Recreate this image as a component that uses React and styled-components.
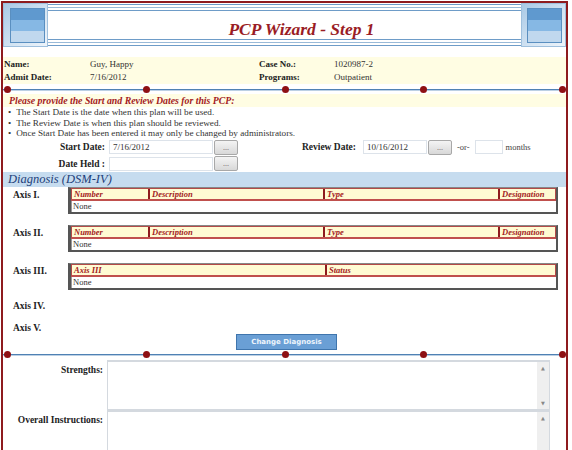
import React from "react";
import styled, { createGlobalStyle } from "styled-components";

const GlobalStyle = createGlobalStyle`
  html, body {
    margin: 0;
    padding: 0;
    background: #ffffff;
  }
  body {
    font-family: "Liberation Serif", serif;
    font-size: 8px;
    color: #222;
    overflow: hidden;
  }
`;

const Page = styled.div`
  width: 567px;
  height: 470px;
  margin-left: 1px;
  margin-top: 1px;
  border: 2px solid #8e1b1e;
  box-sizing: border-box;
  background: #fff;
  font-family: "Liberation Serif", serif;
`;

const Header = styled.div`
  display: flex;
  height: 44px;
`;

const Corner = styled.div`
  width: 45px;
  height: 44px;
  flex: none;
  position: relative;
  background: linear-gradient(135deg, #a9c9e6 0%, #d5e5f3 60%, #eef4fa 100%);
  border: 1px solid #9fc0dd;
  box-sizing: border-box;
`;

const CornerInner = styled.div`
  position: absolute;
  top: 4px;
  left: ${(p) => (p.$right ? "5px" : "6px")};
  width: 33px;
  height: 33px;
  border: 1px solid #5a8fc0;
  display: flex;
  flex-direction: column;
`;

const Band = styled.div`
  flex: 1;
  background: ${(p) => p.color};
`;

const TitleArea = styled.div`
  flex: 1;
  display: flex;
  flex-direction: column;
  justify-content: space-between;
`;

const Stripes = styled.div`
  display: flex;
  flex-direction: column;
  gap: 2px;
  padding: ${(p) => (p.$bottom ? "0 0 1px" : "1px 0 0")};
`;

const Stripe = styled.div`
  height: 1px;
  background: #6e9cc8;
  opacity: ${(p) => p.$o || 1};
`;

const Title = styled.div`
  text-align: center;
  font-size: 17.5px;
  line-height: 18px;
  font-weight: bold;
  font-style: italic;
  color: #9a1c25;
  padding: 7px 0 0 34px;
`;

const Info = styled.div`
  margin-top: 10px;
  background: #fffde3;
  padding: 2px 0 1px 1px;
  display: grid;
  grid-template-columns: 86px 169px 75px 1fr;
  row-gap: 2px;
  line-height: 11px;
  font-size: 9px;
`;

const Label = styled.div`
  font-weight: bold;
  color: #222;
`;

const Value = styled.div`
  color: #333;
`;

const DividerWrap = styled.div`
  position: relative;
  height: 7px;
  margin: ${(p) => p.$margin || "2px 0"};
  display: flex;
  align-items: center;
  justify-content: space-between;
  padding: 0 0 0 1px;
`;

const DividerLine = styled.div`
  position: absolute;
  left: 0;
  right: 0;
  top: 3px;
  height: 1px;
  background: #4f81b4;
  box-shadow: 0 1px 0 #bcd0e4;
`;

const Dot = styled.div`
  width: 7px;
  height: 7px;
  border-radius: 50%;
  background: #8e1014;
  position: relative;
  z-index: 1;
`;

const Notice = styled.div`
  background: #fffde3;
  color: #a31a22;
  font-style: italic;
  font-weight: bold;
  font-size: 9.8px;
  line-height: 13px;
  padding-left: 6px;
`;

const Bullets = styled.ul`
  margin: 0;
  padding: 0 0 0 5px;
  list-style: none;
  font-size: 9.2px;
  line-height: 10.5px;
  color: #333;
`;

const Bullet = styled.li`
  &::before {
    content: "•";
    margin-right: 5px;
  }
`;

const DateRow = styled.div`
  display: flex;
  align-items: center;
  height: ${(p) => p.$h || 17}px;
`;

const DateLabel = styled.div`
  width: ${(p) => p.$w}px;
  text-align: right;
  font-weight: bold;
  font-size: 9.5px;
  color: #222;
  padding-right: ${(p) => p.$pr || 4}px;
  box-sizing: border-box;
`;

const DateInput = styled.div`
  width: ${(p) => p.$w}px;
  height: 14px;
  margin-left: ${(p) => p.$ml || 0}px;
  border: 1px solid #dde3ea;
  box-sizing: border-box;
  padding-left: 3px;
  line-height: 12px;
  font-size: 9px;
  color: #333;
  background: #fff;
`;

const PickBtn = styled.div`
  width: 24px;
  height: 15px;
  margin-left: 1px;
  border: 1px solid #a8a8a8;
  border-radius: 2px;
  box-sizing: border-box;
  background: linear-gradient(#f4f4f4, #d8d8d8);
  text-align: center;
  line-height: 13px;
  font-size: 8px;
  color: #555;
`;

const Small = styled.span`
  font-size: 8.5px;
  color: #444;
  margin-left: ${(p) => p.$ml}px;
`;

const SectionHead = styled.div`
  background: #c6dcef;
  color: #1e3f7a;
  font-style: italic;
  font-size: 12.5px;
  line-height: 15px;
  padding-left: 5px;
`;

const AxisRow = styled.div`
  display: flex;
  align-items: flex-start;
  height: ${(p) => p.$h}px;
`;

const AxisLabel = styled.div`
  width: 65px;
  padding-left: 10px;
  padding-top: 3px;
  box-sizing: border-box;
  font-weight: bold;
  font-size: 9.5px;
  color: #222;
  flex: none;
`;

const Table = styled.div`
  width: 490px;
  border-left: 3px solid #555;
  border-right: 2px solid #555;
  border-bottom: 2px solid #555;
  border-top: 1px solid #888;
  box-sizing: border-box;
`;

const HeadRow = styled.div`
  display: flex;
  background: #fffbd3;
  border: 1px solid #b34a48;
  border-bottom: 2px solid #c0504d;
`;

const HeadCell = styled.div`
  width: ${(p) => p.$w}px;
  flex: ${(p) => (p.$grow ? 1 : "none")};
  border-left: ${(p) => (p.$first ? "none" : "2px solid #8e1b1e")};
  color: #a31a22;
  font-style: italic;
  font-weight: bold;
  font-size: 8.5px;
  line-height: 10px;
  padding-left: 2px;
  box-sizing: border-box;
`;

const BodyRow = styled.div`
  font-size: 8.5px;
  line-height: 11px;
  color: #333;
  padding-left: 1px;
  border-left: 1px solid #999;
`;

const ButtonRow = styled.div`
  display: flex;
  justify-content: center;
  padding-left: 4px;
`;

const BlueButton = styled.div`
  width: 101px;
  height: 16px;
  background: #6a9fd5;
  border: 1px solid #3f75ad;
  box-sizing: border-box;
  color: #eef5fc;
  font-family: "DejaVu Sans", "Liberation Sans", sans-serif;
  font-weight: bold;
  font-size: 7px;
  text-align: center;
  line-height: 14px;
`;

const FieldRow = styled.div`
  display: flex;
  align-items: flex-start;
  height: ${(p) => p.$h}px;
`;

const FieldLabel = styled.div`
  width: 104px;
  text-align: right;
  padding-right: 4px;
  padding-top: 5px;
  box-sizing: border-box;
  font-weight: bold;
  font-size: 9.5px;
  color: #222;
  flex: none;
`;

const TextBox = styled.div`
  width: 443px;
  height: ${(p) => p.$h}px;
  border: 1px solid #d4d9df;
  border-top: 2px solid #d4d9df;
  box-sizing: border-box;
  display: flex;
  justify-content: flex-end;
  background: #fff;
`;

const ScrollBar = styled.div`
  width: 12px;
  background: #efefef;
  display: flex;
  flex-direction: column;
  justify-content: space-between;
  align-items: center;
  padding: 3px 0;
  font-size: 5px;
  color: #888;
  font-family: "DejaVu Sans", sans-serif;
`;

const Divider = ({ margin }) => (
  <DividerWrap $margin={margin}>
    <DividerLine />
    <Dot />
    <Dot />
    <Dot />
    <Dot />
    <Dot />
  </DividerWrap>
);

const CornerBox = ({ right }) => (
  <Corner>
    <CornerInner $right={right}>
      <Band color="#5f99cf" />
      <Band color="#86b8e4" />
      <Band color="#c0d8ee" />
    </CornerInner>
  </Corner>
);

const DiagTable = ({ cols }) => (
  <Table>
    <HeadRow>
      {cols.map((c, i) => (
        <HeadCell key={c.name} $w={c.w} $grow={c.grow} $first={i === 0}>
          {c.name}
        </HeadCell>
      ))}
    </HeadRow>
    <BodyRow>None</BodyRow>
  </Table>
);

const fourCols = [
  { name: "Number", w: 76 },
  { name: "Description", w: 175 },
  { name: "Type", w: 175 },
  { name: "Designation", grow: true },
];

const axis3Cols = [
  { name: "Axis III", w: 253 },
  { name: "Status", grow: true },
];

export default function App() {
  return (
    <>
      <GlobalStyle />
      <Page>
        <Header>
          <CornerBox />
          <TitleArea>
            <Stripes>
              <Stripe />
              <Stripe $o={0.7} />
              <Stripe />
            </Stripes>
            <Title>PCP Wizard - Step 1</Title>
            <Stripes $bottom>
              <Stripe />
              <Stripe $o={0.7} />
              <Stripe />
            </Stripes>
          </TitleArea>
          <CornerBox right />
        </Header>

        <Info>
          <Label>Name:</Label>
          <Value>Guy, Happy</Value>
          <Label>Case No.:</Label>
          <Value>1020987-2</Value>
          <Label>Admit Date:</Label>
          <Value>7/16/2012</Value>
          <Label>Programs:</Label>
          <Value>Outpatient</Value>
        </Info>

        <Divider margin="2px 0 1px" />

        <Notice>Please provide the Start and Review Dates for this PCP:</Notice>
        <Bullets>
          <Bullet>The Start Date is the date when this plan will be used.</Bullet>
          <Bullet>The Review Date is when this plan should be reviewed.</Bullet>
          <Bullet>Once Start Date has been entered it may only be changed by administrators.</Bullet>
        </Bullets>

        <DateRow>
          <DateLabel $w={106}>Start Date:</DateLabel>
          <DateInput $w={104}>7/16/2012</DateInput>
          <PickBtn>...</PickBtn>
          <DateLabel $w={125} $pr={7}>Review Date:</DateLabel>
          <DateInput $w={64}>10/16/2012</DateInput>
          <PickBtn>...</PickBtn>
          <Small $ml={5}>-or-</Small>
          <DateInput $w={28} $ml={5} />
          <Small $ml={3}>months</Small>
        </DateRow>
        <DateRow $h={16}>
          <DateLabel $w={106}>Date Held :</DateLabel>
          <DateInput $w={104} />
          <PickBtn>...</PickBtn>
        </DateRow>

        <SectionHead>Diagnosis (DSM-IV)</SectionHead>

        <AxisRow $h={38}>
          <AxisLabel>Axis I.</AxisLabel>
          <DiagTable cols={fourCols} />
        </AxisRow>
        <AxisRow $h={38}>
          <AxisLabel>Axis II.</AxisLabel>
          <DiagTable cols={fourCols} />
        </AxisRow>
        <AxisRow $h={35}>
          <AxisLabel>Axis III.</AxisLabel>
          <DiagTable cols={axis3Cols} />
        </AxisRow>
        <AxisRow $h={22}>
          <AxisLabel>Axis IV.</AxisLabel>
        </AxisRow>
        <AxisRow $h={14}>
          <AxisLabel>Axis V.</AxisLabel>
        </AxisRow>

        <ButtonRow>
          <BlueButton>Change Diagnosis</BlueButton>
        </ButtonRow>

        <Divider margin="1px 0 2px" />

        <FieldRow $h={50}>
          <FieldLabel>Strengths:</FieldLabel>
          <TextBox $h={50}>
            <ScrollBar>
              <span>▲</span>
              <span>▼</span>
            </ScrollBar>
          </TextBox>
        </FieldRow>
        <FieldRow $h={60}>
          <FieldLabel>Overall Instructions:</FieldLabel>
          <TextBox $h={60}>
            <ScrollBar>
              <span>▲</span>
              <span />
            </ScrollBar>
          </TextBox>
        </FieldRow>
      </Page>
    </>
  );
}
